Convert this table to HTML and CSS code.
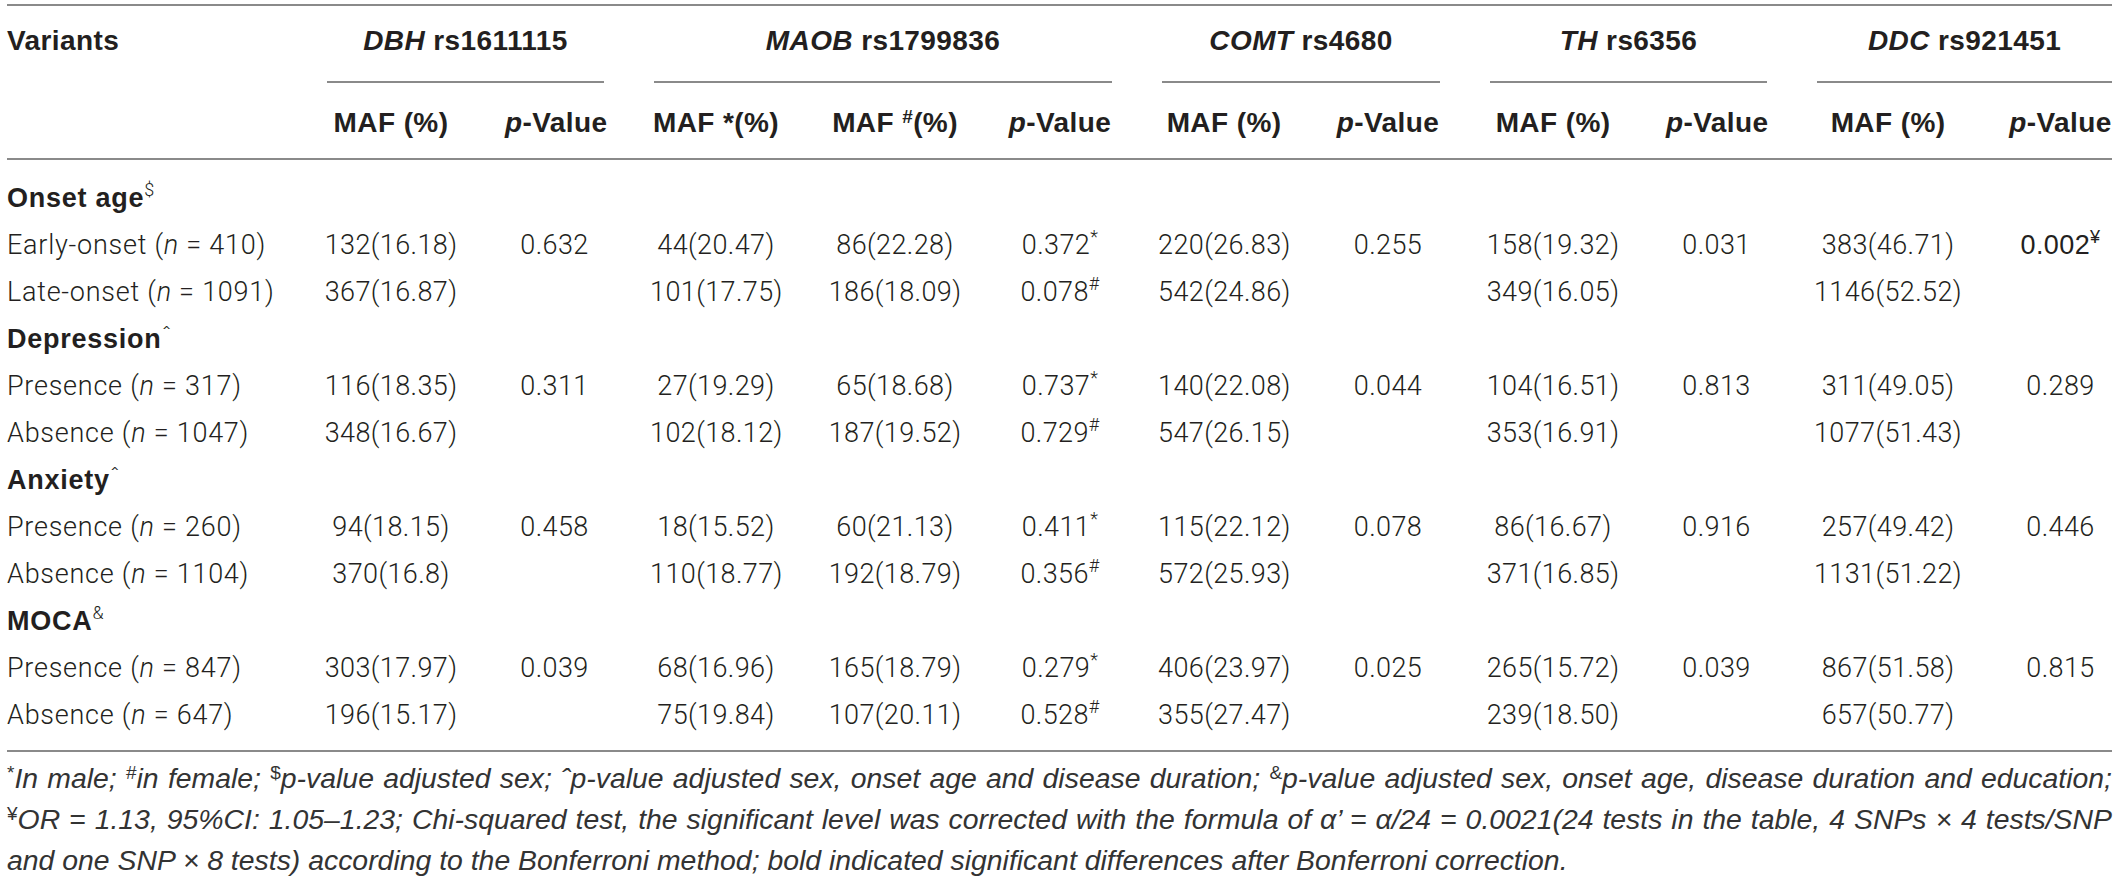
FILE: index.html
```html
<!DOCTYPE html>
<html lang="en">
<head>
    <meta charset="UTF-8">
    <title>Table 3 - Variants and non-motor symptoms</title>
    <link rel="stylesheet" href="styles.css">
</head>
<body>
    <div class="table-wrap">
        <table class="stats">
            <colgroup>
                <col class="c-label">
                <col class="c-w182">
                <col class="c-w145">
                <col class="c-w178">
                <col class="c-w180">
                <col class="c-w150">
                <col class="c-w178">
                <col class="c-w150">
                <col class="c-w180">
                <col class="c-w147">
                <col class="c-w196">
                <col class="c-w149">
            </colgroup>
            <thead>
                <tr class="head-groups">
                    <th class="label">Variants</th>
                    <th class="group" colspan="2"><div class="group-title"><i>DBH</i> rs1611115</div></th>
                    <th class="group" colspan="3"><div class="group-title"><i>MAOB</i> rs1799836</div></th>
                    <th class="group" colspan="2"><div class="group-title"><i>COMT</i> rs4680</div></th>
                    <th class="group" colspan="2"><div class="group-title"><i>TH</i> rs6356</div></th>
                    <th class="group" colspan="2"><div class="group-title"><i>DDC</i> rs921451</div></th>
                </tr>
                <tr class="head-cols">
                    <th class="label"></th>
                    <th>MAF (%)</th>
                    <th><i>p</i>-Value</th>
                    <th>MAF *(%)</th>
                    <th>MAF <sup>#</sup>(%)</th>
                    <th><i>p</i>-Value</th>
                    <th>MAF (%)</th>
                    <th><i>p</i>-Value</th>
                    <th>MAF (%)</th>
                    <th><i>p</i>-Value</th>
                    <th>MAF (%)</th>
                    <th><i>p</i>-Value</th>
                </tr>
            </thead>
            <tbody>
                <tr class="category">
                    <td class="label">Onset age<sup>$</sup></td>
                    <td></td><td></td><td></td><td></td><td></td><td></td><td></td><td></td><td></td><td></td><td></td>
                </tr>
                <tr>
                    <td class="label">Early-onset (<i>n</i> = 410)</td>
                    <td>132(16.18)</td><td>0.632</td>
                    <td>44(20.47)</td><td>86(22.28)</td><td>0.372<sup>*</sup></td>
                    <td>220(26.83)</td><td>0.255</td>
                    <td>158(19.32)</td><td>0.031</td>
                    <td>383(46.71)</td><td class="sig">0.002<sup>¥</sup></td>
                </tr>
                <tr>
                    <td class="label">Late-onset (<i>n</i> = 1091)</td>
                    <td>367(16.87)</td><td></td>
                    <td>101(17.75)</td><td>186(18.09)</td><td>0.078<sup>#</sup></td>
                    <td>542(24.86)</td><td></td>
                    <td>349(16.05)</td><td></td>
                    <td>1146(52.52)</td><td></td>
                </tr>
                <tr class="category">
                    <td class="label">Depression<sup class="hat">ˆ</sup></td>
                    <td></td><td></td><td></td><td></td><td></td><td></td><td></td><td></td><td></td><td></td><td></td>
                </tr>
                <tr>
                    <td class="label">Presence (<i>n</i> = 317)</td>
                    <td>116(18.35)</td><td>0.311</td>
                    <td>27(19.29)</td><td>65(18.68)</td><td>0.737<sup>*</sup></td>
                    <td>140(22.08)</td><td>0.044</td>
                    <td>104(16.51)</td><td>0.813</td>
                    <td>311(49.05)</td><td>0.289</td>
                </tr>
                <tr>
                    <td class="label">Absence (<i>n</i> = 1047)</td>
                    <td>348(16.67)</td><td></td>
                    <td>102(18.12)</td><td>187(19.52)</td><td>0.729<sup>#</sup></td>
                    <td>547(26.15)</td><td></td>
                    <td>353(16.91)</td><td></td>
                    <td>1077(51.43)</td><td></td>
                </tr>
                <tr class="category">
                    <td class="label">Anxiety<sup class="hat">ˆ</sup></td>
                    <td></td><td></td><td></td><td></td><td></td><td></td><td></td><td></td><td></td><td></td><td></td>
                </tr>
                <tr>
                    <td class="label">Presence (<i>n</i> = 260)</td>
                    <td>94(18.15)</td><td>0.458</td>
                    <td>18(15.52)</td><td>60(21.13)</td><td>0.411<sup>*</sup></td>
                    <td>115(22.12)</td><td>0.078</td>
                    <td>86(16.67)</td><td>0.916</td>
                    <td>257(49.42)</td><td>0.446</td>
                </tr>
                <tr>
                    <td class="label">Absence (<i>n</i> = 1104)</td>
                    <td>370(16.8)</td><td></td>
                    <td>110(18.77)</td><td>192(18.79)</td><td>0.356<sup>#</sup></td>
                    <td>572(25.93)</td><td></td>
                    <td>371(16.85)</td><td></td>
                    <td>1131(51.22)</td><td></td>
                </tr>
                <tr class="category">
                    <td class="label">MOCA<sup>&amp;</sup></td>
                    <td></td><td></td><td></td><td></td><td></td><td></td><td></td><td></td><td></td><td></td><td></td>
                </tr>
                <tr>
                    <td class="label">Presence (<i>n</i> = 847)</td>
                    <td>303(17.97)</td><td>0.039</td>
                    <td>68(16.96)</td><td>165(18.79)</td><td>0.279<sup>*</sup></td>
                    <td>406(23.97)</td><td>0.025</td>
                    <td>265(15.72)</td><td>0.039</td>
                    <td>867(51.58)</td><td>0.815</td>
                </tr>
                <tr>
                    <td class="label">Absence (<i>n</i> = 647)</td>
                    <td>196(15.17)</td><td></td>
                    <td>75(19.84)</td><td>107(20.11)</td><td>0.528<sup>#</sup></td>
                    <td>355(27.47)</td><td></td>
                    <td>239(18.50)</td><td></td>
                    <td>657(50.77)</td><td></td>
                </tr>
            </tbody>
        </table>

        <p class="footnote">
            <span class="fn-line fn-full"><sup>*</sup>In male; <sup>#</sup>in female; <sup>$</sup>p-value adjusted sex; ˆp-value adjusted sex, onset age and disease duration; <sup>&amp;</sup>p-value adjusted sex, onset age, disease duration and education;</span>
            <span class="fn-line fn-full"><sup>¥</sup>OR = 1.13, 95%CI: 1.05–1.23; Chi-squared test, the significant level was corrected with the formula of α’ = α/24 = 0.0021(24 tests in the table, 4 SNPs × 4 tests/SNP</span>
            <span class="fn-line">and one SNP × 8 tests) according to the Bonferroni method; bold indicated significant differences after Bonferroni correction.</span>
        </p>
    </div>
</body>
</html>
```

FILE: styles.css
```css
:root {
    --ink: #231f20;
    --rule: #8a8a8a;
    --gap: 46px;
}

* {
    margin: 0;
    padding: 0;
    box-sizing: border-box;
}

body {
    background: #ffffff;
    color: var(--ink);
    font-family: Roboto, "Liberation Sans", Arial, sans-serif;
    font-weight: 300;
}

.table-wrap {
    padding: 4px 7px 0;
    width: 2119px;
}

.stats {
    width: 2105px;
    table-layout: fixed;
    border-collapse: separate;
    border-spacing: 0;
    border-top: 2px solid var(--rule);
    border-bottom: 2px solid var(--rule);
    font-size: 27px;
}

/* column widths: gap + content */
.c-label { width: 270px; }
.c-w182 { width: 182px; }
.c-w145 { width: 145px; }
.c-w178 { width: 178px; }
.c-w180 { width: 180px; }
.c-w150 { width: 150px; }
.c-w147 { width: 147px; }
.c-w196 { width: 196px; }
.c-w149 { width: 149px; }

.stats th,
.stats td {
    padding: 0 0 0 var(--gap);
    text-align: center;
    white-space: nowrap;
    font-weight: inherit;
}

.stats td {
    letter-spacing: 0.4px;
}

.stats .label {
    padding-left: 0;
    text-align: left;
}

.stats td.label {
    letter-spacing: 0.75px;
}

.stats th {
    font-family: "Liberation Sans", Arial, sans-serif;
    font-weight: 700;
    font-size: 28px;
    line-height: 32px;
    vertical-align: top;
    letter-spacing: 0.4px;
}

.head-groups th {
    padding-top: 19px;
}

.head-groups th.group {
    padding-top: 0;
    padding-left: 50px;
}

.group-title {
    padding-top: 19px;
    padding-bottom: 24px;
    border-bottom: 2px solid var(--rule);
}

.head-cols th {
    padding-top: 24px;
    padding-bottom: 19px;
    border-bottom: 2px solid var(--rule);
}

.head-cols th.label {
    padding-left: 0;
}

.stats td {
    line-height: 47px;
    height: 47px;
    vertical-align: middle;
}

.stats tbody tr:first-child td {
    padding-top: 15px;
    height: 62px;
}

.stats tbody tr:last-child td {
    padding-bottom: 11px;
    height: 58px;
}

.category .label {
    font-family: "Liberation Sans", Arial, sans-serif;
    font-weight: 700;
    letter-spacing: 0.2px;
}

.category sup {
    font-family: Roboto, "Liberation Sans", Arial, sans-serif;
    font-weight: 300;
}

.sig {
    font-family: "Liberation Sans", Arial, sans-serif;
    font-weight: 700;
}

sup {
    font-size: 18px;
    line-height: 0;
    vertical-align: 11px;
}

sup.hat {
    font-size: 24px;
    vertical-align: 4px;
}

.head-cols sup {
    font-size: 19px;
    vertical-align: 9px;
}

.footnote {
    margin-top: 6px;
    width: 2105px;
    font-family: "Liberation Sans", Arial, sans-serif;
    font-weight: 400;
    font-size: 28.4px;
    line-height: 41px;
    font-style: italic;
    color: #333;
}

.fn-line {
    display: block;
}

.fn-full {
    text-align: justify;
    text-align-last: justify;
}

.footnote sup {
    font-style: normal;
    font-size: 19px;
    vertical-align: 9px;
}
```
